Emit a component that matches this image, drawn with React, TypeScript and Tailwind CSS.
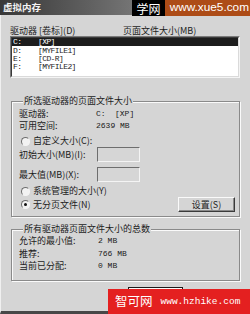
import React from "react";

const cjk = "font-['Noto_Sans_CJK_SC',sans-serif]";
const mono = "font-['Liberation_Mono','Noto_Sans_CJK_SC',monospace]";

const drives = [
  { letter: "C:", label: "[XP]" },
  { letter: "D:", label: "[MYFILE1]" },
  { letter: "E:", label: "[CD-R]" },
  { letter: "F:", label: "[MYFILE2]" },
];

function Radio({ checked }: { checked?: boolean }) {
  return (
    <span className="inline-flex h-[9px] w-[9px] shrink-0 items-center justify-center rounded-full border border-t-[#6e6e6e] border-l-[#6e6e6e] border-r-[#f4f4f4] border-b-[#f4f4f4] bg-[#f2f2f2]">
      {checked && <span className="h-[3px] w-[3px] rounded-full bg-[#111]" />}
    </span>
  );
}

function SunkenBox() {
  return (
    <div className="ml-[78px] h-[15px] w-[43px] border border-t-[#6e6e6e] border-l-[#6e6e6e] border-r-[#f4f4f4] border-b-[#f4f4f4] bg-[#d6d6d6]" />
  );
}

function Legend({ children }: { children: React.ReactNode }) {
  return (
    <legend className="ml-[4px] bg-[#d5d5d5] px-[1px] leading-[12px]">{children}</legend>
  );
}

export default function App() {
  return (
    <div
      className={`relative flex h-[314px] w-[250px] flex-col overflow-hidden bg-[#d5d5d5] text-[9px] text-[#1c1c1c] ${cjk}`}>
      {/* title bar */}
      <div className="flex h-[15px] shrink-0 items-center bg-gradient-to-r from-[#383838] to-[#b0b0b0] pl-[3px]">
        <span className="text-[9.5px] font-bold leading-none text-[#f4f4f4]">虚拟内存</span>
      </div>

      {/* dialog body */}
      <div className="flex flex-1 flex-col border-l border-b-[3px] border-l-[#f0f0f0] border-b-[#474747] pl-[9px]">
        <div className="mt-[10px] flex h-[11px] items-center leading-[11px]">
          <span className="w-[113px]">驱动器 [卷标](D)</span>
          <span>页面文件大小(MB)</span>
        </div>

        {/* drive list */}
        <div className="h-[42px] w-[230px] border border-t-[#7a7a7a] border-l-[#7a7a7a] border-r-[#f4f4f4] border-b-[#f4f4f4] bg-white">
          <div className="h-full border border-t-[#3a3a3a] border-l-[#3a3a3a] border-r-[#dadada] border-b-[#dadada]">
            {drives.map((d, i) => (
              <div
                key={d.letter}
                className={`flex h-[8.4px] items-center pl-[1px] text-[8px] leading-none tracking-[-0.6px] ${mono} ${
                  i === 0 ? "bg-[#1d1d1d] text-white" : "text-[#1c1c1c]"
                }`}>
                <span className="w-[25px]">{d.letter}</span>
                <span>{d.label}</span>
              </div>
            ))}
          </div>
        </div>

        {/* selected drive */}
        <fieldset className="ml-[1px] mt-[17px] w-[229px] border border-[#8a8a8a] pb-[4px] pl-[7px] pr-[4px] shadow-[inset_1px_1px_0_#fafafa,1px_1px_0_#fafafa]">
          <Legend>所选驱动器的页面文件大小</Legend>
          <div className="mt-[1px] flex h-[12px] items-center leading-[12px]">
            <span className="w-[77px]">驱动器:</span>
            <span className={`w-[19px] text-[8px] ${mono}`}>C:</span>
            <span className={`text-[8px] ${mono}`}>[XP]</span>
          </div>
          <div className="flex h-[11.5px] items-center leading-[11.5px]">
            <span className="w-[77px]">可用空间:</span>
            <span className={`text-[8px] ${mono}`}>2639 MB</span>
          </div>
          <div className="mt-[3.5px] flex h-[12px] items-center gap-[3px] pl-[2px]">
            <Radio />
            <span>自定义大小(C):</span>
          </div>
          <div className="flex h-[15px] items-center">
            <span className="w-0 whitespace-nowrap">初始大小(MB)(I):</span>
            <SunkenBox />
          </div>
          <div className="mt-[5px] flex h-[15px] items-center">
            <span className="w-0 whitespace-nowrap">最大值(MB)(X):</span>
            <SunkenBox />
          </div>
          <div className="mt-[3px] flex h-[12px] items-center gap-[3px] pl-[2px]">
            <Radio />
            <span>系统管理的大小(Y)</span>
          </div>
          <div className="flex h-[15px] items-center pl-[2px]">
            <Radio checked />
            <span className="ml-[3px]">无分页文件(N)</span>
            <button className="ml-auto flex h-[15px] w-[57px] items-center justify-center border border-t-[#fafafa] border-l-[#fafafa] border-r-[#3a3a3a] border-b-[#3a3a3a] leading-none shadow-[inset_-1px_-1px_0_#8a8a8a]">
              设置(S)
            </button>
          </div>
        </fieldset>

        {/* totals */}
        <fieldset className="ml-[1px] mt-[6px] w-[229px] border border-[#8a8a8a] pb-[8px] pl-[7px] shadow-[inset_1px_1px_0_#fafafa,1px_1px_0_#fafafa]">
          <Legend>所有驱动器页面文件大小的总数</Legend>
          <div className="flex h-[12px] items-center">
            <span className="w-[79px]">允许的最小值:</span>
            <span className={`text-[8px] ${mono}`}>2 MB</span>
          </div>
          <div className="mt-[1px] flex h-[12px] items-center">
            <span className="w-[79px]">推荐:</span>
            <span className={`text-[8px] ${mono}`}>766 MB</span>
          </div>
          <div className="flex h-[12px] items-center">
            <span className="w-[79px]">当前已分配:</span>
            <span className={`text-[8px] ${mono}`}>0 MB</span>
          </div>
        </fieldset>

        {/* OK button, mostly hidden under the watermark */}
        <div className="mt-[6px] pl-[118px]">
          <div className="h-[16px] w-[55px] border border-[#1a1a1a] shadow-[inset_1px_1px_0_#fafafa,inset_-1px_-1px_0_#6a6a6a]" />
        </div>
      </div>

      {/* watermark top */}
      <div className="absolute right-0 top-0 flex h-[16px]">
        <div className="flex w-[33px] items-center justify-center bg-black pt-[1px] text-[12px] leading-[14px] text-white">
          学网
        </div>
        <div className="flex w-[85px] items-center justify-end bg-[#ad4c17] pr-[1px] font-['Liberation_Sans',sans-serif] text-[11.8px] leading-none whitespace-nowrap text-white">
          www.xue5.com
        </div>
      </div>

      {/* watermark bottom */}
      <div className="absolute bottom-0 right-0 flex h-[25px] w-[142px] items-center bg-[#e42020] pl-[7px] text-white">
        <span className="text-[12.5px] leading-none">智可网</span>
        <span className="ml-[8px] font-['Liberation_Mono',monospace] text-[9.5px] leading-none">www.hzhike.com</span>
      </div>
    </div>
  );
}
